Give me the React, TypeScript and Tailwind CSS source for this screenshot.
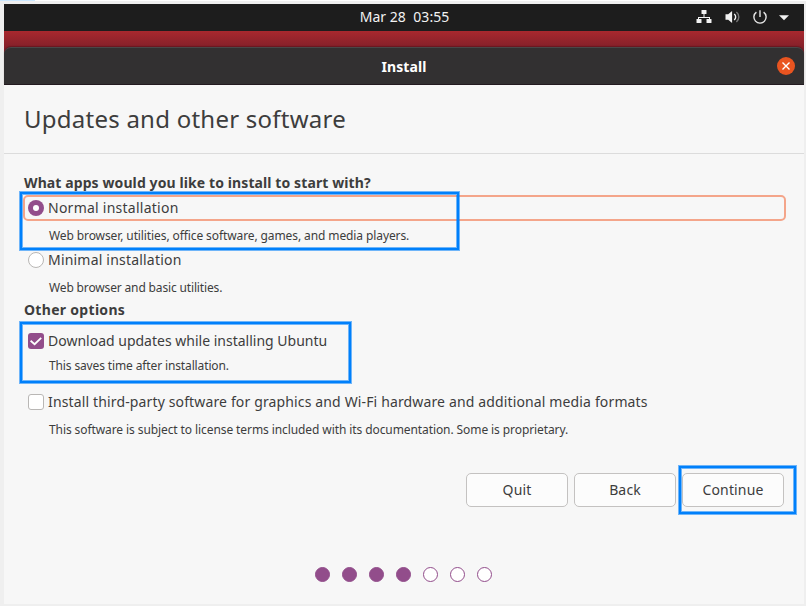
import type { ReactNode } from "react";

function Highlight({ className }: { className: string }) {
  return (
    <div
      className={`pointer-events-none absolute border-2 border-[#0080fb] shadow-[0_0_0_1px_rgba(0,128,251,0.55),inset_0_0_0_1px_rgba(0,128,251,0.55)] ${className}`}
    />
  );
}

function Radio({ checked = false }: { checked?: boolean }) {
  return checked ? (
    <span className="flex size-4 shrink-0 items-center justify-center rounded-full bg-[#924d8b]">
      <span className="size-1.5 rounded-full bg-white" />
    </span>
  ) : (
    <span className="size-4 shrink-0 rounded-full border border-[#b9b7b5] bg-white" />
  );
}

function Checkbox({ checked = false }: { checked?: boolean }) {
  return checked ? (
    <span className="flex size-4 shrink-0 items-center justify-center rounded-[3px] bg-[#924d8b]">
      <svg viewBox="0 0 16 16" className="size-4" fill="none" stroke="#fff" strokeWidth="1.8">
        <path d="M2.6 7.8 6.6 11.2 13.2 4.8" />
      </svg>
    </span>
  ) : (
    <span className="size-4 shrink-0 rounded-[3px] border border-[#b9b7b5] bg-white" />
  );
}

function Option({ control, children, className }: { control: ReactNode; children: ReactNode; className: string }) {
  return (
    <div className={`flex items-center gap-1 pl-6 text-sm ${className}`}>
      {control}
      <span className="whitespace-nowrap">{children}</span>
    </div>
  );
}

function Note({ children, className }: { children: ReactNode; className: string }) {
  return <p className={`flex items-center pt-0.5 pl-[45px] text-xs whitespace-nowrap ${className}`}>{children}</p>;
}

function Button({ children }: { children: ReactNode }) {
  return (
    <button className="h-[34px] w-[102px] rounded-[5px] border border-[#c4c2c1] bg-[#fcfcfc] text-sm tracking-[0.15px]">
      {children}
    </button>
  );
}

function StatusIcons() {
  return (
    <div className="flex items-center">
      <svg width="16" height="16" viewBox="0 0 16 16" fill="#f2f2f2">
        <rect x="5.5" y="1" width="5" height="4" rx=".6" />
        <path d="M7.5 5h1v3h5.5v2.5h-1V9H3v1.5H2V8h5.5z" />
        <rect x=".5" y="10" width="5" height="4" rx=".6" />
        <rect x="10.5" y="10" width="5" height="4" rx=".6" />
      </svg>
      <svg width="16" height="16" viewBox="0 0 16 16" fill="none" className="ml-[13px]">
        <path d="M.5 5.2h2.7L7.1 2v12L3.2 10.8H.5z" fill="#f2f2f2" />
        <path d="M9.2 5a3.8 3.8 0 0 1 0 6" stroke="#f2f2f2" strokeWidth="1.4" />
        <path d="M11.4 3a6.4 6.4 0 0 1 0 10" stroke="#777" strokeWidth="1.4" />
      </svg>
      <svg width="16" height="16" viewBox="0 0 16 16" fill="none" stroke="#e6e6e6" strokeWidth="1.4" className="ml-[11px]">
        <path d="M4.4 3.1a6.1 6.1 0 1 0 7.2 0M8 1.2V8" />
      </svg>
      <svg width="10" height="6" viewBox="0 0 10 6" fill="#f2f2f2" className="mt-0.5 ml-[11px]">
        <path d="M0 .3h10L5 5.3z" />
      </svg>
    </div>
  );
}

export default function App() {
  return (
    <div className="relative h-[606px] w-[806px] overflow-hidden bg-[#efefef] font-['Noto_Sans',sans-serif] text-[#3d3d3d]">
      <div className="flex h-1 items-start">
        <div className="h-px w-[35px] bg-[#cce8ff]" />
        <div className="h-px flex-1 bg-white" />
      </div>

      <div className="ml-1 flex h-[600px] w-[800px] flex-col bg-[#f7f7f7]">
        <div className="grid h-[27px] shrink-0 grid-cols-[1fr_auto_1fr] items-center bg-[#1d1d1d] pb-px text-sm text-[#f2f2f2]">
          <span />
          <span className="pl-px tracking-[0.05px] whitespace-pre">Mar 28  03:55</span>
          <div className="flex justify-end pr-[15px]">
            <StatusIcons />
          </div>
        </div>

        <div className="shrink-0 bg-linear-to-b from-[#a8282e] to-[#801f29] to-[18px] pt-4">
          <div className="grid h-[38px] grid-cols-[1fr_auto_1fr] items-center rounded-t-[7px] border-t border-b border-t-[#4a4748] border-b-[#231a20] bg-[#323031] shadow-[0_-1px_1px_rgba(60,10,20,0.4)]">
            <span />
            <h1 className="pt-0.5 text-sm font-bold tracking-[0.1px] text-white">Install</h1>
            <div className="flex justify-end pr-[9px]">
              <span className="flex size-[18px] items-center justify-center rounded-full bg-[#e95420]">
                <svg width="8" height="8" viewBox="0 0 8 8" fill="none" stroke="#fff" strokeWidth="1.4">
                  <path d="M.5.5l7 7M7.5.5l-7 7" />
                </svg>
              </span>
            </div>
          </div>
        </div>

        <div className="flex h-[69px] shrink-0 items-center border-b border-[#dcdcdc] pl-5">
          <h2 className="text-[24px] tracking-[0.24px]">Updates and other software</h2>
        </div>

        <div className="flex flex-col pt-[19px]">
          <h3 className="h-5 pl-5 text-sm leading-5 font-bold tracking-[0.1px]">
            What apps would you like to install to start with?
          </h3>
          <Option
            className="mt-0.5 mr-[18px] ml-[19px] h-[26px] rounded-[5px] border-2 border-[#f4a58a] pl-[3px]! tracking-[0.25px]"
            control={<Radio checked />}
          >
            Normal installation
          </Option>
          <Note className="h-7 tracking-[-0.1px]">
            Web browser, utilities, office software, games, and media players.
          </Note>
          <Option className="h-[22px] tracking-[0.2px]" control={<Radio />}>
            Minimal installation
          </Option>
          <Note className="h-8 tracking-[-0.15px]">Web browser and basic utilities.</Note>
          <h3 className="h-[14px] pl-5 text-sm leading-[14px] font-bold tracking-[0.3px]">Other options</h3>
          <Option className="mt-3 h-6" control={<Checkbox checked />}>
            Download updates while installing Ubuntu
          </Option>
          <Note className="h-6 tracking-[-0.13px]">This saves time after installation.</Note>
          <Option className="mt-[13px] h-6 tracking-[0.14px]" control={<Checkbox />}>
            Install third-party software for graphics and Wi-Fi hardware and additional media formats
          </Option>
          <Note className="mt-[3px] h-6 tracking-[-0.09px]">
            This software is subject to license terms included with its documentation. Some is proprietary.
          </Note>
        </div>

        <div className="mt-8 flex justify-end gap-1.5 pr-5">
          <Button>Quit</Button>
          <Button>Back</Button>
          <Button>Continue</Button>
        </div>

        <div className="mt-[60px] flex gap-3 pl-[311px]">
          {[1, 2, 3, 4, 5, 6, 7].map((step) => (
            <span
              key={step}
              className={`size-[15px] rounded-full border border-[#924d8b] ${step <= 4 ? "bg-[#924d8b]" : "bg-white"}`}
            />
          ))}
        </div>
      </div>

      <Highlight className="top-[192px] left-5 h-[58px] w-[439px]" />
      <Highlight className="top-[322px] left-5 h-[61px] w-[331px]" />
      <Highlight className="top-[466px] left-[679px] h-12 w-[117px]" />
    </div>
  );
}
